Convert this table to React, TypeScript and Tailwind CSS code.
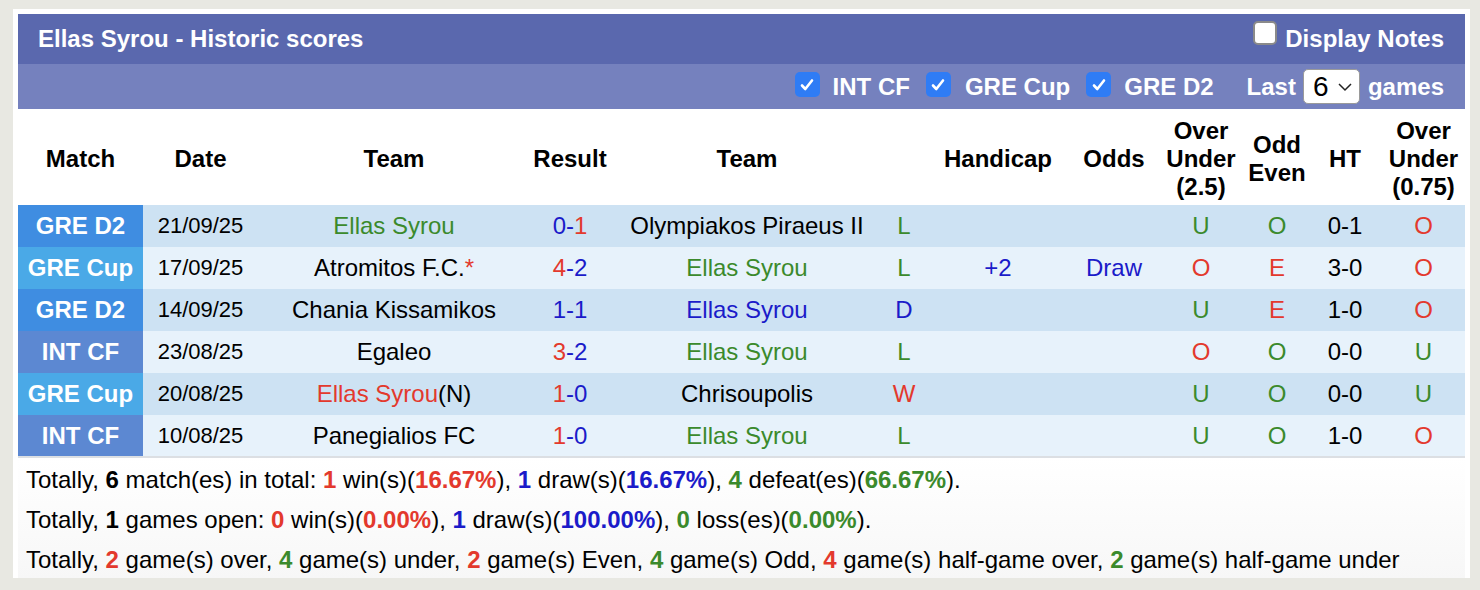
import React from 'react';

const RED = 'text-[#e3392d]';
const BLUE = 'text-[#1b1bc9]';
const GREEN = 'text-[#3b8a2c]';

type Row = {
  league: string;
  leagueBg: string;
  date: string;
  home: React.ReactNode;
  score: React.ReactNode;
  away: React.ReactNode;
  wl: React.ReactNode;
  hcap?: React.ReactNode;
  odds?: React.ReactNode;
  ou: React.ReactNode;
  oe: React.ReactNode;
  ht: string;
  ou2: React.ReactNode;
};

const c = (cls: string, t: string) => <span className={cls}>{t}</span>;

const score = (a: string, b: string, win: 'h' | 'a' | 'd') => (
  <span className={BLUE}>
    <span className={win === 'h' ? RED : BLUE}>{a}</span>-<span className={win === 'a' ? RED : BLUE}>{b}</span>
  </span>
);

const D2 = 'bg-[#3f8de1]';
const CUP = 'bg-[#4aa9e7]';
const INT = 'bg-[#5c88d2]';

const rows: Row[] = [
  {
    league: 'GRE D2', leagueBg: D2, date: '21/09/25',
    home: c(GREEN, 'Ellas Syrou'), score: score('0', '1', 'a'), away: 'Olympiakos Piraeus II',
    wl: c(GREEN, 'L'), ou: c(GREEN, 'U'), oe: c(GREEN, 'O'), ht: '0-1', ou2: c(RED, 'O'),
  },
  {
    league: 'GRE Cup', leagueBg: CUP, date: '17/09/25',
    home: <>Atromitos F.C.<span className={RED}>*</span></>, score: score('4', '2', 'h'), away: c(GREEN, 'Ellas Syrou'),
    wl: c(GREEN, 'L'), hcap: c(BLUE, '+2'), odds: c(BLUE, 'Draw'), ou: c(RED, 'O'), oe: c(RED, 'E'), ht: '3-0', ou2: c(RED, 'O'),
  },
  {
    league: 'GRE D2', leagueBg: D2, date: '14/09/25',
    home: 'Chania Kissamikos', score: score('1', '1', 'd'), away: c(BLUE, 'Ellas Syrou'),
    wl: c(BLUE, 'D'), ou: c(GREEN, 'U'), oe: c(RED, 'E'), ht: '1-0', ou2: c(RED, 'O'),
  },
  {
    league: 'INT CF', leagueBg: INT, date: '23/08/25',
    home: 'Egaleo', score: score('3', '2', 'h'), away: c(GREEN, 'Ellas Syrou'),
    wl: c(GREEN, 'L'), ou: c(RED, 'O'), oe: c(GREEN, 'O'), ht: '0-0', ou2: c(GREEN, 'U'),
  },
  {
    league: 'GRE Cup', leagueBg: CUP, date: '20/08/25',
    home: <><span className={RED}>Ellas Syrou</span>(N)</>, score: score('1', '0', 'h'), away: 'Chrisoupolis',
    wl: c(RED, 'W'), ou: c(GREEN, 'U'), oe: c(GREEN, 'O'), ht: '0-0', ou2: c(GREEN, 'U'),
  },
  {
    league: 'INT CF', leagueBg: INT, date: '10/08/25',
    home: 'Panegialios FC', score: score('1', '0', 'h'), away: c(GREEN, 'Ellas Syrou'),
    wl: c(GREEN, 'L'), ou: c(GREEN, 'U'), oe: c(GREEN, 'O'), ht: '1-0', ou2: c(RED, 'O'),
  },
];

function CheckBox({ checked }: { checked: boolean }) {
  if (!checked) {
    return <span className="inline-block w-[24px] h-[24px] rounded-[5px] bg-white border-2 border-[#8a8a8a]" />;
  }
  return (
    <span className="inline-flex w-[25px] h-[25px] rounded-[5px] bg-[#2f7cf5] items-center justify-center">
      <svg width="16" height="16" viewBox="0 0 16 16" fill="none">
        <path d="M3 8.5l3.3 3.5L13 3.5" stroke="white" strokeWidth="2.6" strokeLinecap="round" strokeLinejoin="round" />
      </svg>
    </span>
  );
}

const B = ({ cls, children }: { cls?: string; children: React.ReactNode }) => (
  <b className={`font-bold ${cls ?? ''}`}>{children}</b>
);

export default function App() {
  return (
    <div
      className="w-[1480px] h-[590px] bg-[#e8e8e2] pl-[13px] pt-[9px] text-[24px] text-black"
      style={{ fontFamily: '"Liberation Sans", Arial, Helvetica, sans-serif' }}
    >
      <div className="w-[1457px] h-[569px] bg-white px-[5px] pt-[5px] flex flex-col overflow-hidden">
        {/* title bar */}
        <div className="h-[50px] shrink-0 bg-[#5a68ae] flex items-center justify-between pl-[20px] pr-[21px] text-white font-bold">
          <div className="leading-none">Ellas Syrou - Historic scores</div>
          <label className="flex items-center gap-[8px] leading-none">
            <span className="-mt-[8px]"><CheckBox checked={false} /></span>
            <span>Display Notes</span>
          </label>
        </div>
        {/* filter bar */}
        <div className="h-[45px] shrink-0 bg-[#7581be] flex items-center justify-end pr-[21px] text-white font-bold leading-none">
          <span className="-mt-[4px] mr-[13px]"><CheckBox checked /></span>
          <span className="mr-[16px]">INT CF</span>
          <span className="-mt-[4px] mr-[14px]"><CheckBox checked /></span>
          <span className="mr-[16px]">GRE Cup</span>
          <span className="-mt-[4px] mr-[13px]"><CheckBox checked /></span>
          <span className="mr-[33px]">GRE D2</span>
          <span className="mr-[7px]">Last</span>
          <span className="w-[57px] h-[35px] bg-white rounded-[5px] border border-[#9a9a9a] flex items-center justify-between pl-[9px] pr-[6px] text-black font-normal text-[28px]">
            6
            <svg width="16" height="10" viewBox="0 0 16 10" fill="none">
              <path d="M2 2l6 6 6-6" stroke="#222" strokeWidth="1.5" />
            </svg>
          </span>
          <span className="ml-[8px]">games</span>
        </div>
        {/* table */}
        <table className="w-[1447px] shrink-0 table-fixed border-collapse text-center">
          <colgroup>
            <col className="w-[125px]" />
            <col className="w-[115px]" />
            <col className="w-[272px]" />
            <col className="w-[80px]" />
            <col className="w-[274px]" />
            <col className="w-[40px]" />
            <col className="w-[148px]" />
            <col className="w-[84px]" />
            <col className="w-[90px]" />
            <col className="w-[62px]" />
            <col className="w-[74px]" />
            <col className="w-[83px]" />
          </colgroup>
          <thead>
            <tr className="h-[96px] font-bold leading-[28px] [&>th]:pt-[4px]">
              <th>Match</th>
              <th>Date</th>
              <th>Team</th>
              <th>Result</th>
              <th>Team</th>
              <th></th>
              <th>Handicap</th>
              <th>Odds</th>
              <th>Over<br />Under<br />(2.5)</th>
              <th>Odd<br />Even</th>
              <th>HT</th>
              <th>Over<br />Under<br />(0.75)</th>
            </tr>
          </thead>
          <tbody>
            {rows.map((r, i) => (
              <tr
                key={i}
                className={`h-[42px] leading-none ${i % 2 === 0 ? 'bg-[#cde2f3]' : 'bg-[#e7f2fb]'} ${i === rows.length - 1 ? 'border-b-2 border-[#dcdfe3]' : ''}`}
              >
                <td className={`${r.leagueBg} text-white font-bold`}>{r.league}</td>
                <td className="text-[22px]">{r.date}</td>
                <td>{r.home}</td>
                <td>{r.score}</td>
                <td>{r.away}</td>
                <td>{r.wl}</td>
                <td>{r.hcap}</td>
                <td>{r.odds}</td>
                <td>{r.ou}</td>
                <td>{r.oe}</td>
                <td>{r.ht}</td>
                <td>{r.ou2}</td>
              </tr>
            ))}
          </tbody>
        </table>
        {/* summary */}
        <div className="pl-[8px] pt-[2px] leading-[40px] bg-gradient-to-b from-white to-[#f7f7f7] flex-1">
          <div>
            Totally, <B>6</B> match(es) in total: <B cls={RED}>1</B> win(s)(<B cls={RED}>16.67%</B>), <B cls={BLUE}>1</B> draw(s)(<B cls={BLUE}>16.67%</B>), <B cls={GREEN}>4</B> defeat(es)(<B cls={GREEN}>66.67%</B>).
          </div>
          <div>
            Totally, <B>1</B> games open: <B cls={RED}>0</B> win(s)(<B cls={RED}>0.00%</B>), <B cls={BLUE}>1</B> draw(s)(<B cls={BLUE}>100.00%</B>), <B cls={GREEN}>0</B> loss(es)(<B cls={GREEN}>0.00%</B>).
          </div>
          <div>
            Totally, <B cls={RED}>2</B> game(s) over, <B cls={GREEN}>4</B> game(s) under, <B cls={RED}>2</B> game(s) Even, <B cls={GREEN}>4</B> game(s) Odd, <B cls={RED}>4</B> game(s) half-game over, <B cls={GREEN}>2</B> game(s) half-game under
          </div>
        </div>
      </div>
    </div>
  );
}
